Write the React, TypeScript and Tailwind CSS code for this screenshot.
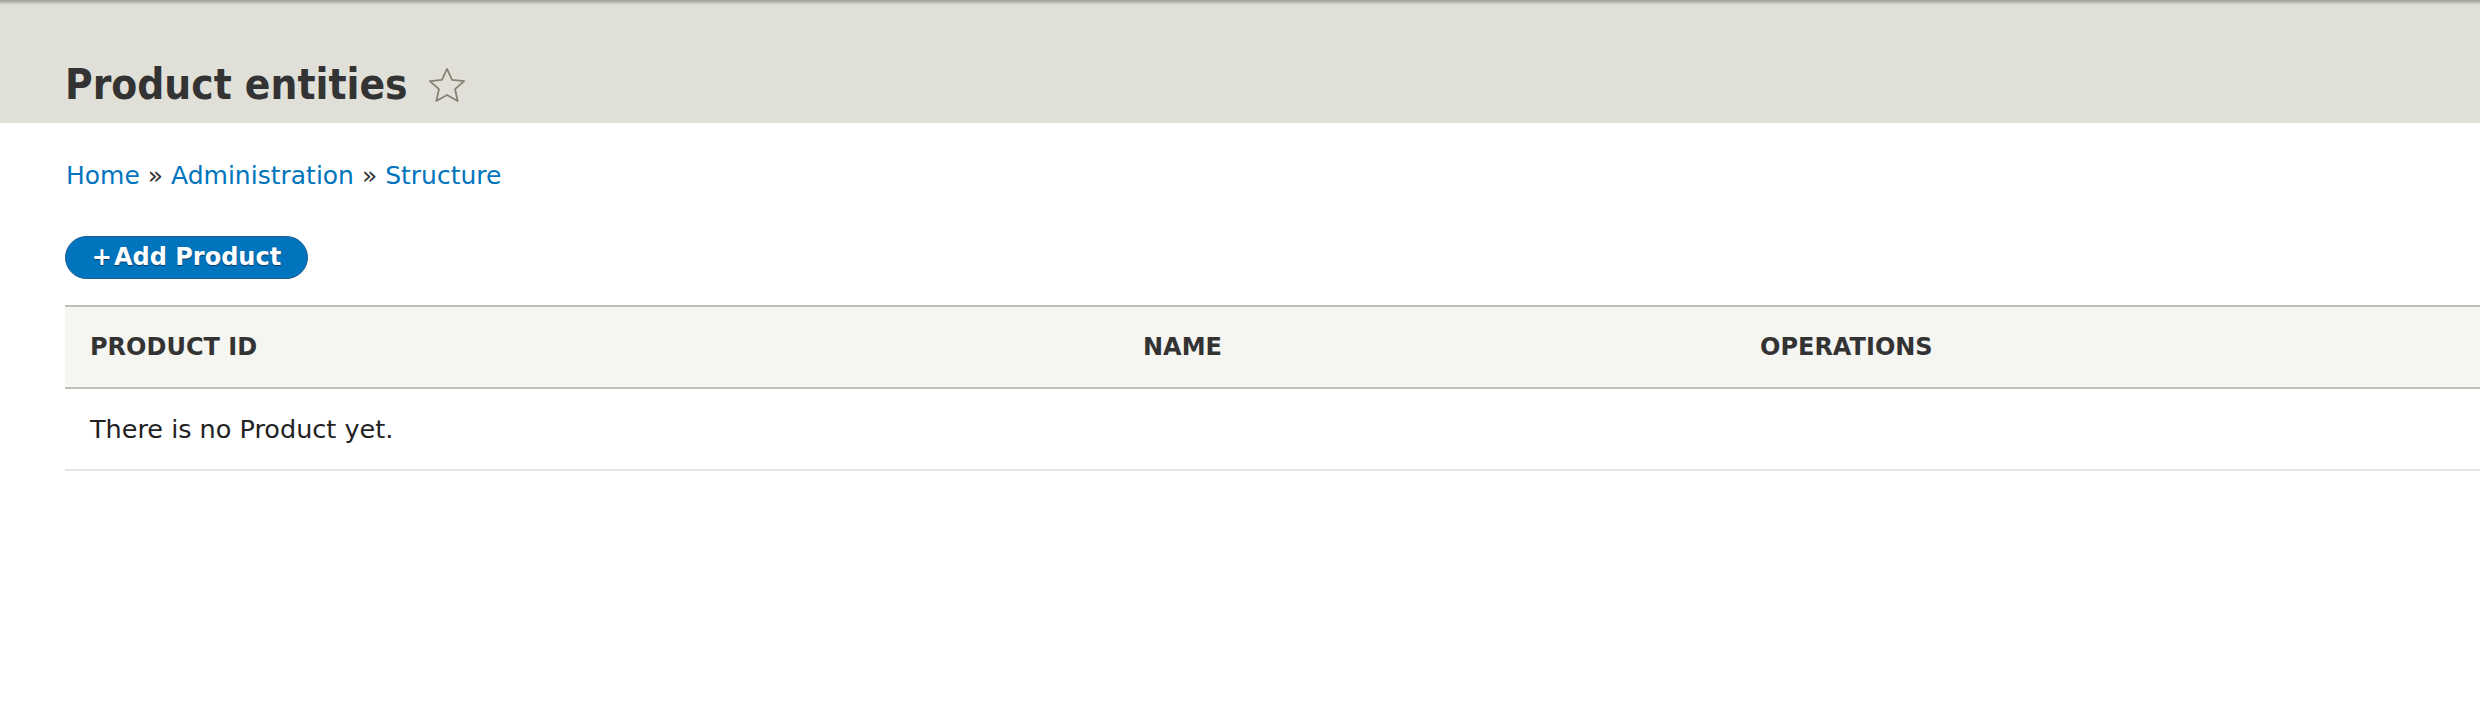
import React from 'react'

const FONT = '"DejaVu Sans", "Liberation Sans", sans-serif'
const CONDENSED = '"DejaVu Sans Condensed", "DejaVu Sans", sans-serif'

const COLUMNS = [
  { label: 'Product ID', width: 'w-[1053px]' },
  { label: 'Name', width: 'w-[617px]' },
  { label: 'Operations', width: '' },
]

function StarIcon() {
  return (
    <svg width="42" height="42" viewBox="0 0 24 24" className="ml-[18px] mb-[-2px]">
      <path
        d="M12 2.2l2.9 6.3 6.9.7-5.2 4.6 1.5 6.8L12 17.1l-6.1 3.5 1.5-6.8L2.2 9.2l6.9-.7z"
        fill="none"
        stroke="#868170"
        strokeWidth="1"
        strokeLinejoin="round"
      />
    </svg>
  )
}

export default function App() {
  return (
    <div className="min-h-[720px] w-full bg-white text-[#333]" style={{ fontFamily: FONT }}>
      <header className="h-[123px] bg-[#e0e0d8]">
        <div className="h-[5px] bg-gradient-to-b from-[#9e9e98] to-[#e0e0d8]" />
        <div className="flex items-center pl-[65px] pt-[54px]">
          <h1
            className="text-[42px] leading-[52px] font-bold text-[#333]"
            style={{ fontFamily: CONDENSED }}
          >
            Product entities
          </h1>
          <StarIcon />
        </div>
      </header>

      <nav className="pl-[66px] pt-[38px] text-[25px] leading-[30px]">
        <a className="text-[#0074bd]">Home</a>
        <span className="text-[#333]"> » </span>
        <a className="text-[#0074bd]">Administration</a>
        <span className="text-[#333]"> » </span>
        <a className="text-[#0074bd]">Structure</a>
      </nav>

      <div className="pl-[65px] pt-[45px]">
        <button
          className="h-[43px] w-[243px] rounded-full border border-[#1e5c90] bg-[#0074bd] text-white text-[24px] font-bold leading-none flex items-center justify-center pb-[1px]"
          style={{ textShadow: '0 1px 1px #0b3a66' }}
        >
          <span className="mr-[2px]">+</span>Add Product
        </button>
      </div>

      <div className="pl-[65px] pt-[26px]">
        <table className="w-full border-collapse text-left">
          <thead>
            <tr className="bg-[#f5f5f2] border-y-2 border-[#bfbfba]">
              {COLUMNS.map((col) => (
                <th
                  key={col.label}
                  className={`${col.width} h-[82px] pl-[25px] text-[24px] font-bold uppercase text-[#333] align-middle`}
                >
                  {col.label}
                </th>
              ))}
            </tr>
          </thead>
          <tbody>
            <tr className="border-b-2 border-[#e6e4df]">
              <td colSpan={3} className="h-[82px] pl-[25px] text-[25.5px] text-[#222] align-middle">
                There is no Product yet.
              </td>
            </tr>
          </tbody>
        </table>
      </div>
    </div>
  )
}
